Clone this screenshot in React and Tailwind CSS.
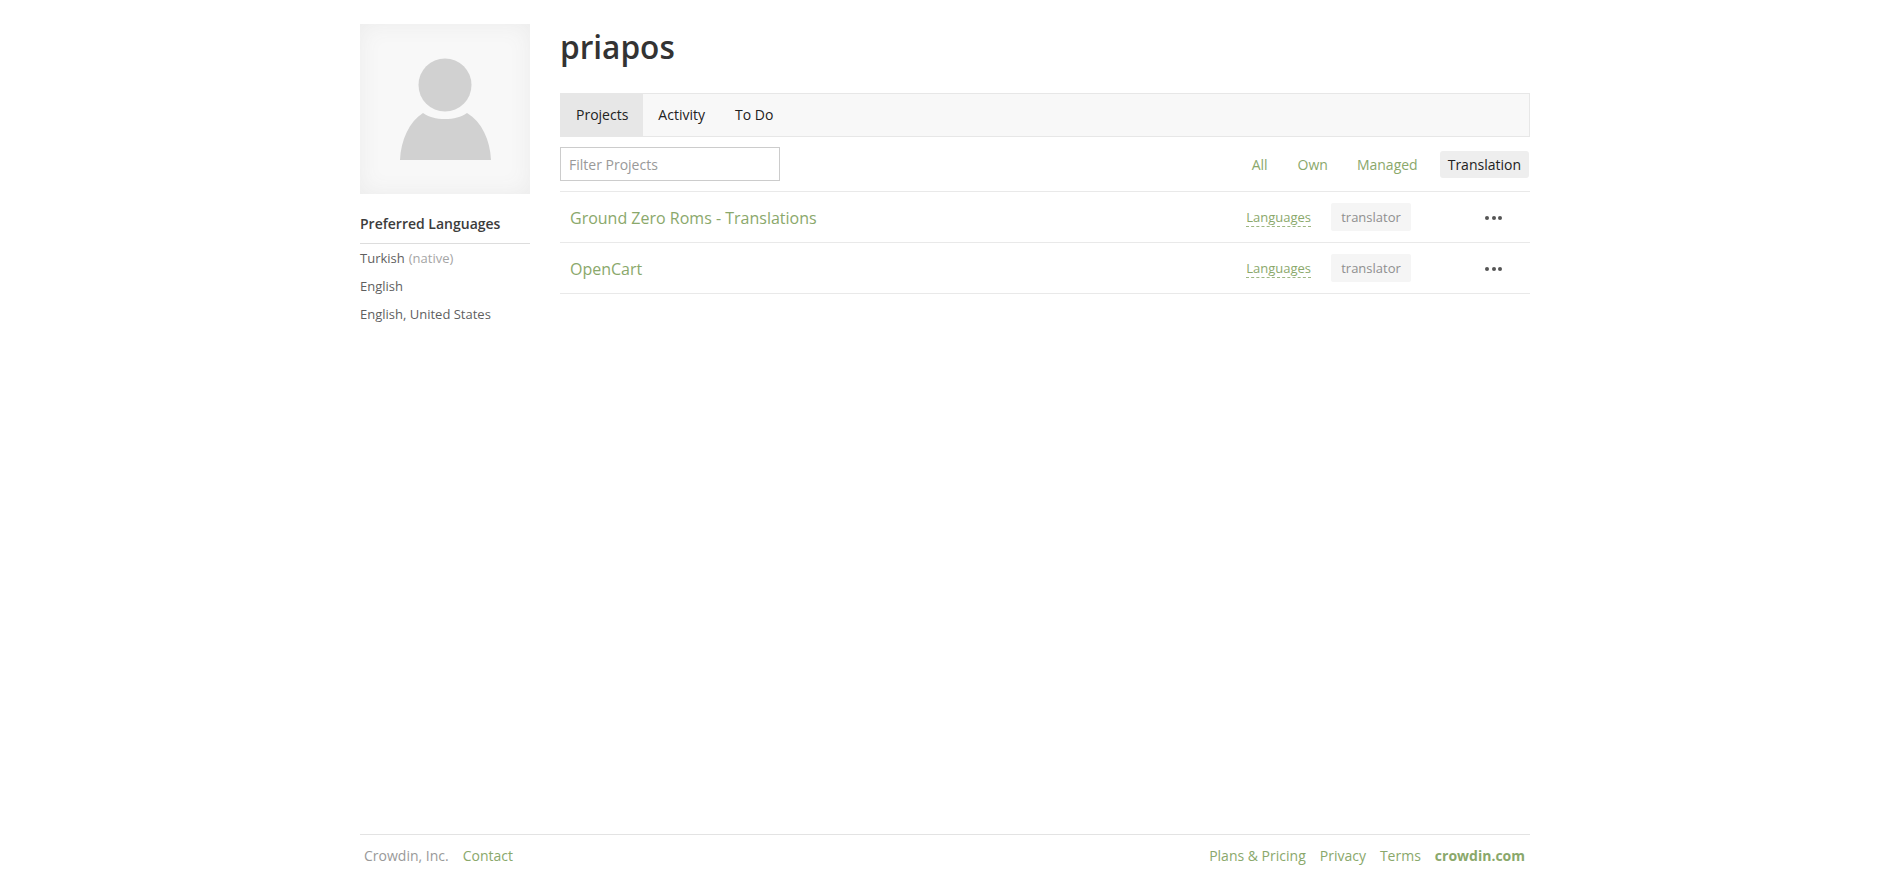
import { useState } from 'react';

const projects = ['Ground Zero Roms - Translations', 'OpenCart'];
const languages = ['English', 'English, United States'];

const Avatar = () => (
    <div className="w-[170px] h-[170px] bg-[#f8f8f8] shadow-[inset_0_0_22px_#ebebeb]">
        <svg viewBox="0 0 170 170" className="w-full h-full">
            <circle cx="85" cy="61" r="26.5" fill="#d1d1d1" />
            <path d="M63 89 C69 93 76 95 85 95 C94 95 101 93 107 89 C122 98 130 116 131 136 L40 136 C41 116 49 98 63 89 Z" fill="#d1d1d1" />
        </svg>
    </div>
);

const ProjectRow = ({ name }) => (
    <div className="flex items-center h-[51px] border-b border-[#e9e9e9] pl-[10px]">
        <a className="text-[16px] text-[#8aa86b] flex-1 pt-[2px]">{name}</a>
        <a className="text-[13px] leading-[18px] text-[#8aa86b] border-b border-dashed border-[#9db682]">Languages</a>
        <span className="ml-[20px] w-[80px] h-[28px] pt-[2px] flex items-center justify-center bg-[#f5f5f5] rounded-[2px] text-[13px] text-[#8f8f8f]">translator</span>
        <div className="ml-[74px] mr-[28px] mt-[1px] w-[17px] flex justify-between">
            <span className="w-[4px] h-[4px] rounded-full bg-[#555555]" />
            <span className="w-[4px] h-[4px] rounded-full bg-[#555555]" />
            <span className="w-[4px] h-[4px] rounded-full bg-[#555555]" />
        </div>
    </div>
);

export default function App() {
    const [filter, setFilter] = useState('');

    return (
        <div className="min-h-[869px] flex flex-col bg-white pr-[6px] font-['Open_Sans',sans-serif] text-[#333333]">
            <div className="w-[1170px] mx-auto flex-1 flex gap-[30px] pt-[24px]">
                {/* Sidebar */}
                <aside className="w-[170px] shrink-0">
                    <Avatar />
                    <h4 className="mt-[20px] pb-[9px] border-b border-[#dddddd] text-[14px] leading-[20px] font-semibold text-[#3c3c3c]">Preferred Languages</h4>
                    <ul className="mt-[1px] text-[13px] text-[#5f5f5f]">
                        <li className="h-[28px] flex items-center gap-[4px]">Turkish <span className="text-[#a5a5a5]">(native)</span></li>
                        {languages.map((lang) => (
                            <li key={lang} className="h-[28px] flex items-center">{lang}</li>
                        ))}
                    </ul>
                </aside>

                {/* Main */}
                <main className="flex-1">
                    <h1 className="text-[31.6px] leading-[45px] font-semibold text-[#333333]">priapos</h1>

                    <nav className="mt-[24px] h-[44px] flex bg-[#f8f8f8] border border-[#e7e7e7] text-[14px] leading-[42px] text-[#222222]">
                        <a className="px-[15px] bg-[#e7e7e7]">Projects</a>
                        <a className="px-[15px]">Activity</a>
                        <a className="px-[15px]">To Do</a>
                    </nav>

                    <div className="mt-[10px] flex items-center justify-between pb-[10px] border-b border-[#e9e9e9]">
                        <input
                            value={filter}
                            onChange={(e) => setFilter(e.target.value)}
                            placeholder="Filter Projects"
                            className="w-[220px] h-[34px] px-[8px] border border-[#cccccc] text-[14px] outline-none placeholder:text-[#999999]"
                        />
                        <div className="flex items-center text-[14px] text-[#8aa86b]">
                            <a className="px-[8px] py-[3px] mr-[14px]">All</a>
                            <a className="px-[8px] py-[3px] mr-[13px]">Own</a>
                            <a className="px-[8px] py-[3px] mr-[14px]">Managed</a>
                            <a className="px-[8px] py-[3px] mr-[1px] bg-[#eeeeee] rounded-[3px] text-[#222222]">Translation</a>
                        </div>
                    </div>

                    {projects.map((p) => (
                        <ProjectRow key={p} name={p} />
                    ))}
                </main>
            </div>

            <footer className="w-[1170px] mx-auto h-[35px] border-t border-[#e3e3e3] px-[4px] pt-[6px] flex items-center justify-between text-[14px] text-[#8aa86b]">
                <div className="flex gap-[14px]">
                    <span className="text-[#999999]">Crowdin, Inc.</span>
                    <a>Contact</a>
                </div>
                <div className="flex gap-[14px] pr-[1px]">
                    <a>Plans &amp; Pricing</a>
                    <a>Privacy</a>
                    <a>Terms</a>
                    <a className="font-bold">crowdin.com</a>
                </div>
            </footer>
        </div>
    );
}
